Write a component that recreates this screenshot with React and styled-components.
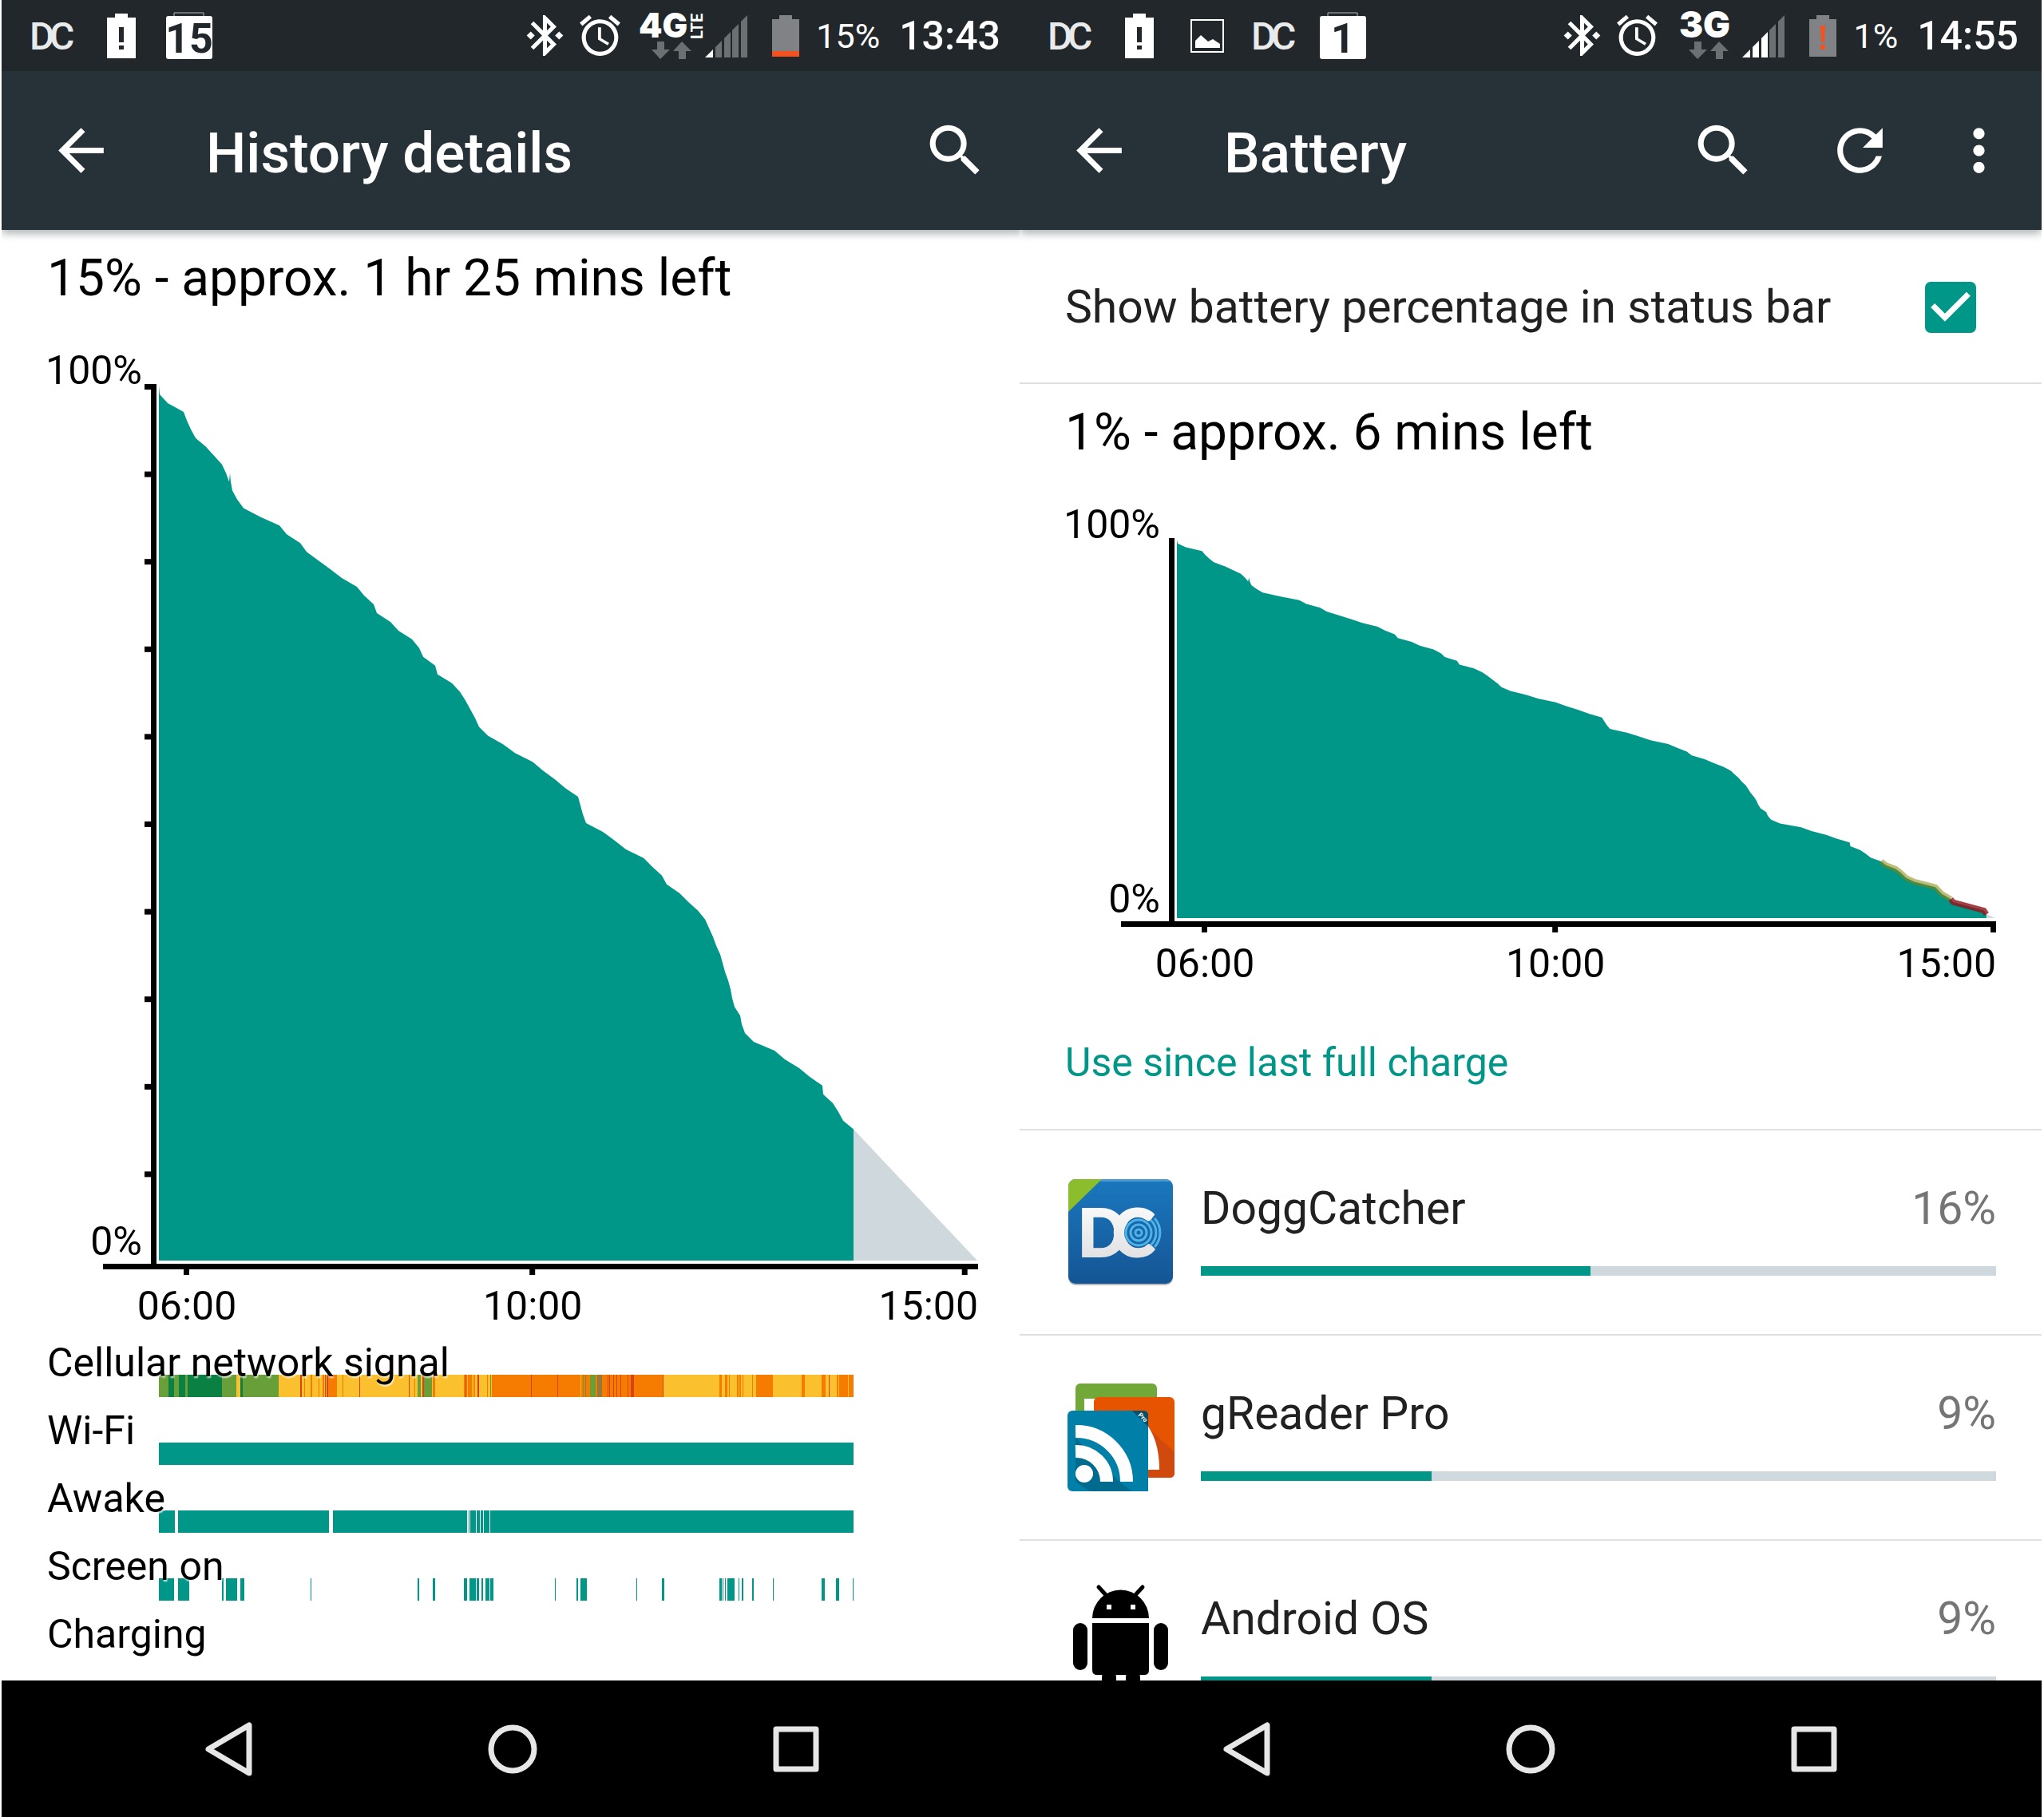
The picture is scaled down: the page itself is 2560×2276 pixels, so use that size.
import React from 'react';
import styled, { createGlobalStyle } from 'styled-components';
import {
  MdAlarm,
  MdArrowBack,
  MdBluetoothConnected,
  MdMoreVert,
  MdRefresh,
  MdSearch,
} from 'react-icons/md';

const TEAL = '#009688';
const GREY = '#cfd8dc';

// [x, battery %], x is in chart units since the charger was unplugged
const HISTORY = [
  [0, 100], [1, 99], [11, 98], [31, 97], [35, 96], [40, 95], [46, 94], [59, 93],
  [69, 92], [79, 91], [84, 90], [88, 89], [89, 90], [90, 89], [92, 88], [98, 87],
  [106, 86], [127, 85], [151, 84], [160, 83], [177, 82], [185, 81], [200, 80],
  [215, 79], [229, 78], [248, 77], [257, 76], [269, 75], [273, 74], [290, 73],
  [300, 72], [317, 71], [326, 70], [331, 69], [346, 68], [349, 67], [367, 66],
  [377, 65], [384, 64], [390, 63], [396, 62], [401, 61], [412, 60], [431, 59],
  [446, 58], [468, 57], [481, 56], [496, 55], [509, 54], [525, 53], [528, 52],
  [531, 51], [535, 50], [556, 49], [571, 48], [585, 47], [607, 46], [618, 45],
  [630, 44], [636, 43], [652, 42], [663, 41], [675, 40], [684, 39], [689, 38],
  [694, 37], [698, 36], [703, 35], [706, 34], [709, 33], [713, 32], [716, 31],
  [718, 30], [721, 29], [728, 28], [730, 27], [734, 26], [745, 25], [771, 24],
  [784, 23], [802, 22], [815, 21], [831, 20], [832, 19], [844, 18], [851, 17],
  [857, 16], [870, 15],
];

const LOW = [
  [870, 15], [876, 14], [888, 13], [894, 12], [901, 10.6], [911, 9.6],
  [937, 8.2], [945, 6.4], [956, 5],
];

const CRITICAL = [[956, 5], [959, 4.2], [997, 2], [1000, 1]];

const SIGNAL_COLORS = {
  D: '#0b8043',
  G: '#689f38',
  Y: '#fbc02d',
  O: '#f57c00',
  R: '#d84315',
  B: '#94793a',
};

// [from, to, strength], later entries are painted over earlier ones
const SIGNAL = [
  [0, 150, 'G'], [12, 19, 'D'], [25, 33, 'D'], [36, 79, 'D'], [97, 102, 'Y'],
  [102, 105, 'D'], [150, 417, 'Y'], [177, 179, 'R'], [182, 183, 'O'],
  [190, 192, 'O'], [200, 201, 'O'], [205, 207, 'O'], [208, 209, 'R'],
  [210, 212, 'R'], [212, 223, 'O'], [230, 231, 'O'], [251, 252, 'R'],
  [313, 314, 'R'], [320, 321, 'O'], [324, 328, 'G'], [330, 332, 'R'],
  [332, 342, 'G'], [343, 346, 'O'], [382, 386, 'O'], [384, 385, 'R'],
  [387, 392, 'O'], [393, 394, 'O'], [395, 396, 'O'], [399, 401, 'R'],
  [411, 412, 'O'], [415, 416, 'G'], [417, 631, 'O'], [466, 467, 'R'],
  [499, 500, 'R'], [528, 529, 'Y'], [531, 532, 'G'], [534, 535, 'B'],
  [540, 547, 'G'], [549, 555, 'B'], [562, 563, 'R'], [564, 565, 'R'],
  [569, 570, 'R'], [573, 574, 'R'], [578, 579, 'R'], [587, 588, 'R'],
  [591, 595, 'R'], [631, 632, 'R'], [632, 870, 'Y'], [702, 705, 'O'],
  [709, 712, 'O'], [714, 715, 'O'], [724, 726, 'O'], [727, 729, 'O'],
  [731, 732, 'O'], [743, 744, 'O'], [748, 769, 'O'], [805, 809, 'O'],
  [830, 835, 'O'], [839, 840, 'R'], [849, 851, 'O'], [852, 863, 'O'],
  [864, 870, 'O'],
];

const AWAKE = [
  [0, 20], [24, 213], [218, 386], [388, 389], [390, 397], [398, 402],
  [403, 406], [407, 414], [415, 870],
];

const SCREEN_ON = [
  [0, 19], [24, 38], [79, 81], [84, 98], [102, 107], [190, 191], [324, 326],
  [343, 346], [382, 386], [389, 397], [398, 401], [404, 406], [409, 414],
  [415, 419], [496, 497], [523, 525], [528, 536], [598, 599], [630, 633],
  [702, 705], [706, 707], [709, 710], [712, 721], [726, 727], [730, 732],
  [743, 745], [769, 770], [830, 834], [848, 852], [869, 870],
];

const TIMELINES = [
  { label: 'Cellular network signal', spans: SIGNAL },
  { label: 'Wi-Fi', spans: [[0, 870]] },
  { label: 'Awake', spans: AWAKE },
  { label: 'Screen on', spans: SCREEN_ON },
  { label: 'Charging', spans: [] },
];

/* ---------- status bar icons ---------- */

const DcNotification = () => (
  <svg width="60" height="60" viewBox="0 0 60 60">
    <text
      x="0"
      y="47"
      fill="#e8eaeb"
      fontFamily="Roboto, sans-serif"
      fontSize="48"
      fontWeight="500"
    >
      D<tspan x="25">C</tspan>
    </text>
  </svg>
);

const BatteryNotification = () => (
  <svg width="36" height="56" viewBox="0 0 36 56">
    <path
      fill="#fff"
      fillRule="evenodd"
      d="M10 0h16v5h10v51H0V5h10zM15 17v19h6V17zM15 40v5h6v-5z"
    />
  </svg>
);

const PictureNotification = () => (
  <svg width="42" height="42" viewBox="0 0 42 42">
    <rect x="1" y="1" width="40" height="40" fill="none" stroke="#fff" strokeWidth="2" />
    <path fill="#fff" d="M6 36V27l7-7 9 8 6-3 9 6v5z" />
  </svg>
);

const CalendarNotification = ({ day }) => (
  <svg width="60" height="60" viewBox="0 0 60 60">
    <path d="M11 6V1h37v5" fill="none" stroke="#b9bcbe" strokeWidth="1" />
    <rect x="1" y="5" width="58" height="54" rx="3" fill="#fff" />
    <text
      x="30"
      y="51"
      textAnchor="middle"
      fill="#21272a"
      fontFamily="Roboto, sans-serif"
      fontWeight="700"
      fontSize="52"
    >
      {day}
    </text>
  </svg>
);

const BARS = [[0, 10], [13, 21], [24, 32], [34, 42], [45, 53]];

const NetworkIcon = ({ type, lte, bars }) => (
  <svg width="156" height="64" viewBox="0 0 156 64">
    <text
      x={lte ? 10 : 14}
      y="34"
      fill="#fff"
      fontFamily="Inter, sans-serif"
      fontSize={lte ? 42 : 45}
      fontWeight="900"
    >
      {type}
    </text>
    {lte && (
      <text
        transform="translate(90 36) rotate(-90)"
        fill="#fff"
        fontFamily="Roboto, sans-serif"
        fontSize="20"
        fontWeight="700"
      >
        LTE
      </text>
    )}
    <g fill="#6b7073" transform="translate(26 39)">
      <path d="M7 0h9v10h7L11 22 0 10h7z" />
      <path d="M34 22h9V12h7L38 0 27 12h7z" />
    </g>
    <g transform="translate(93 6)">
      {BARS.map(([from, to], i) => (
        <path
          key={from}
          fill={i < bars ? '#fff' : '#6b7073'}
          d={`M${from} 53V${53 - from}L${to} ${53 - to}V53z`}
        />
      ))}
    </g>
  </svg>
);

const BatteryStatus = ({ critical }) => (
  <svg width="60" height="60" viewBox="0 0 60 60">
    <path fill="#808285" d="M22 4h16v5h9v47H13V9h9z" />
    {critical ? (
      <path fill="#f4511e" d="M27 17h6l-1 21h-4zM27 41h6v6h-6z" />
    ) : (
      <path fill="#f4511e" d="M13 49h34v7H13z" />
    )}
  </svg>
);

/* ---------- app icons ---------- */

const DoggCatcherIcon = () => (
  <svg viewBox="0 0 142 142">
    <defs>
      <linearGradient id="dc-back" x1="0" y1="0" x2="0" y2="1">
        <stop offset="0" stopColor="#1a78be" />
        <stop offset="1" stopColor="#155594" />
      </linearGradient>
      <linearGradient id="dc-text" x1="0" y1="0" x2="0" y2="1">
        <stop offset="0" stopColor="#fff" />
        <stop offset="1" stopColor="#dcdcde" />
      </linearGradient>
      <clipPath id="dc-clip">
        <rect x="6" y="5" width="131" height="131" rx="9" />
      </clipPath>
    </defs>
    <rect x="6" y="7" width="131" height="131" rx="9" fill="#b8bcc2" />
    <g clipPath="url(#dc-clip)">
      <rect x="6" y="5" width="131" height="131" fill="url(#dc-back)" />
      <rect x="6" y="5" width="131" height="3" fill="#4a9bd3" />
      <path d="M6 5h42L6 46z" fill="#8cbd2c" />
    </g>
    <text
      x="18"
      y="102"
      fill="url(#dc-text)"
      stroke="url(#dc-text)"
      strokeWidth="2"
      fontFamily="Lato, sans-serif"
      fontWeight="900"
      fontSize="81"
    >
      D<tspan x="61">C</tspan>
    </text>
    <circle cx="94" cy="72" r="18" fill="#1767ab" />
    <g fill="none" stroke="#4fb3e6" strokeWidth="3">
      <circle cx="94" cy="72" r="4" />
      <circle cx="94" cy="72" r="10" />
      <circle cx="94" cy="72" r="16" />
      <path d="M109 56a22 22 0 0 1 0 32M114 54a27 27 0 0 1 0 36" />
    </g>
  </svg>
);

const GReaderIcon = () => (
  <svg viewBox="0 0 142 142">
    <rect x="15" y="4" width="102" height="100" rx="6" fill="#72a838" />
    <path d="M26 23h14v18H26z" fill="#fff" />
    <rect x="38" y="21" width="101" height="101" rx="6" fill="#e65400" />
    <path d="M100 54l39 36v26q0 6-6 6H100z" fill="#cf4a0c" />
    <path d="M100 50q20 22 20 62h-20z" fill="#fff" />
    <rect x="5" y="38" width="101" height="101" rx="6" fill="#0080a8" />
    <path d="M15 72l55 55 16 12H33L15 127z" fill="#006b8f" />
    <path d="M15 72a55 55 0 0 1 55 55h16v12h20V92L86 72H15z" fill="#0080a8" />
    <path d="M86 38h14q6 0 6 6v14z" fill="#0a4f68" />
    <text
      transform="translate(93 44) rotate(45)"
      fill="#fff"
      fontFamily="Roboto, sans-serif"
      fontWeight="700"
      fontSize="8"
    >
      Pro
    </text>
    <g fill="none" stroke="#fff" strokeWidth="16">
      <path d="M15 64a63 63 0 0 1 64 63" />
      <path d="M15 89a38 38 0 0 1 39 38" />
    </g>
    <circle cx="26" cy="117" r="11" fill="#fff" />
  </svg>
);

const AndroidIcon = () => (
  <svg viewBox="0 0 142 142">
    <path d="M36 41a35 35 0 0 1 71 0z" />
    <path d="M44 2l11 12M99 2L88 14" stroke="#000" strokeWidth="5" strokeLinecap="round" />
    <path d="M54 24h6v6h-6zM84 24h6v6h-6z" fill="#fff" />
    <path d="M36 47h71v59q0 6-6 6H42q-6 0-6-6z" />
    <rect x="12" y="47" width="18" height="59" rx="9" />
    <rect x="113" y="47" width="18" height="59" rx="9" />
    <rect x="48" y="106" width="18" height="34" rx="9" />
    <rect x="78" y="106" width="18" height="34" rx="9" />
  </svg>
);

/* ---------- chart ---------- */

const PLOT_LEFT = 140;
const PLOT_TOP = 43;
const BASE_HOUR = 108.3;

const Chart = ({ plotHeight, hourWidth, points, end, levelTicks, low }) => {
  const bottom = PLOT_TOP + plotHeight;
  const toXY = ([x, level]) =>
    `${PLOT_LEFT + (x * hourWidth) / BASE_HOUR},${bottom - (level * plotHeight) / 100}`;
  const line = list => list.map(toXY).join(' ');
  const last = points[points.length - 1];
  const hourX = hour => PLOT_LEFT + 35 + (hour - 6) * hourWidth;

  return (
    <ChartSvg viewBox={`0 0 1166 ${bottom + 86}`} role="img" aria-label="Battery level">
      <polygon fill={GREY} points={line([last, [end, 0], [last[0], 0]])} />
      <polygon fill={TEAL} points={line([[0, 0], ...points, [last[0], 0]])} />
      {low && (
        <g fill="none" strokeWidth="7">
          <polyline stroke="rgba(137, 130, 5, 0.54)" points={line(LOW)} />
          <polyline stroke="rgba(145, 20, 28, 0.82)" points={line(CRITICAL)} />
        </g>
      )}
      <rect x="130" y="41" width="7" height={bottom - 37} />
      <rect x="70" y={bottom + 4} width="1096" height="7" />
      {levelTicks &&
        [...Array(10)].map((_, i) => (
          <rect key={i} x="122" y={41 + (i * plotHeight) / 10} width="8" height="7" />
        ))}
      <text x="119" y="41" textAnchor="end">100%</text>
      <text x="119" y={bottom - 7} textAnchor="end">0%</text>
      {[6, 10, 15].map(hour => (
        <rect
          key={hour}
          x={Math.min(hourX(hour) - 4, 1159)}
          y={bottom + 10}
          width="7"
          height="8"
        />
      ))}
      <text x={hourX(6)} y={bottom + 74} textAnchor="middle">06:00</text>
      <text x={hourX(10)} y={bottom + 74} textAnchor="middle">10:00</text>
      <text x="1166" y={bottom + 74} textAnchor="end">15:00</text>
    </ChartSvg>
  );
};

const Timeline = ({ label, spans }) => (
  <TimelineRow>
    <TimelineBar viewBox="0 0 870 28" preserveAspectRatio="none">
      {spans.map(([from, to, strength]) => (
        <rect
          key={from}
          x={from}
          width={to - from}
          height="28"
          fill={strength ? SIGNAL_COLORS[strength] : TEAL}
        />
      ))}
    </TimelineBar>
    <TimelineLabel>{label}</TimelineLabel>
  </TimelineRow>
);

const AppUsage = ({ icon, name, percent, bar }) => (
  <UsageRow>
    <AppIcon>{icon}</AppIcon>
    <UsageBody>
      <UsageText>
        <span>{name}</span>
        <Percent>{percent}%</Percent>
      </UsageText>
      <Track>
        <Fill style={{ width: `${bar}%` }} />
      </Track>
    </UsageBody>
  </UsageRow>
);

const NavBar = () => (
  <Nav>
    <NavButton aria-label="Back">
      <svg width="62" height="70" viewBox="0 0 62 70">
        <path d="M56 5v60L5 35z" />
      </svg>
    </NavButton>
    <NavButton aria-label="Home">
      <svg width="62" height="62" viewBox="0 0 62 62">
        <circle cx="31" cy="31" r="27" />
      </svg>
    </NavButton>
    <NavButton aria-label="Recent apps">
      <svg width="62" height="62" viewBox="0 0 62 62">
        <rect x="6" y="6" width="50" height="50" />
      </svg>
    </NavButton>
  </Nav>
);

const StatusRight = ({ network, level, critical, time }) => (
  <StatusGroup>
    <MdBluetoothConnected />
    <MdAlarm />
    {network}
    <BatteryStatus critical={critical} />
    <Level>{level}%</Level>
    <Clock>{time}</Clock>
  </StatusGroup>
);

const HistoryScreen = () => (
  <Screen>
    <StatusBar>
      <Notifications>
        <DcNotification />
        <BatteryNotification />
        <CalendarNotification day="15" />
      </Notifications>
      <StatusRight network={<NetworkIcon type="4G" lte bars={1} />} level={15} time="13:43" />
    </StatusBar>
    <AppBar>
      <BackButton aria-label="Navigate up"><MdArrowBack /></BackButton>
      <Title>History details</Title>
      <Action aria-label="Search"><MdSearch /></Action>
    </AppBar>
    <Content>
      <Section>
        <Summary>15% - approx. 1 hr 25 mins left</Summary>
        <Chart plotHeight={1096} hourWidth={108.3} points={HISTORY} end={1025} levelTicks />
        <Timelines>
          {TIMELINES.map(row => (
            <Timeline key={row.label} {...row} />
          ))}
        </Timelines>
      </Section>
    </Content>
    <NavBar />
  </Screen>
);

const BatteryScreen = () => (
  <Screen>
    <StatusBar>
      <Notifications>
        <DcNotification />
        <BatteryNotification />
        <PictureNotification />
        <DcNotification />
        <CalendarNotification day="1" />
      </Notifications>
      <StatusRight network={<NetworkIcon type="3G" bars={3} />} level={1} critical time="14:55" />
    </StatusBar>
    <AppBar>
      <BackButton aria-label="Navigate up"><MdArrowBack /></BackButton>
      <Title>Battery</Title>
      <Action aria-label="Search"><MdSearch /></Action>
      <Action aria-label="Refresh"><MdRefresh /></Action>
      <MoreAction aria-label="More options"><MdMoreVert /></MoreAction>
    </AppBar>
    <Content>
      <Setting>
        Show battery percentage in status bar
        <CheckWrap>
          <Checkbox type="checkbox" defaultChecked />
          <svg viewBox="3 3 18 18">
            <path fill="#fff" d="M10 17l-5-5 1.41-1.41L10 14.17l7.59-7.59L19 8z" />
          </svg>
        </CheckWrap>
      </Setting>
      <Section>
        <Summary>1% - approx. 6 mins left</Summary>
        <Chart
          plotHeight={474}
          hourWidth={109.8}
          points={[...HISTORY, ...LOW, ...CRITICAL]}
          end={1011}
          low
        />
        <Category>Use since last full charge</Category>
      </Section>
      <UsageList>
        <AppUsage icon={<DoggCatcherIcon />} name="DoggCatcher" percent={16} bar={49} />
        <AppUsage icon={<GReaderIcon />} name="gReader Pro" percent={9} bar={29} />
        <AppUsage icon={<AndroidIcon />} name="Android OS" percent={9} bar={29} />
      </UsageList>
    </Content>
    <NavBar />
  </Screen>
);

const App = () => (
  <>
    <GlobalStyle />
    <Page>
      <HistoryScreen />
      <BatteryScreen />
    </Page>
  </>
);

export default App;

const GlobalStyle = createGlobalStyle`
  * {
    box-sizing: border-box;
  }

  body {
    margin: 0;
    background: #fff;
    font-family: Roboto, 'Liberation Sans', sans-serif;
  }

  svg {
    display: block;
    flex-shrink: 0;
    overflow: visible;
  }

  button {
    border: 0;
    background: none;
    color: inherit;
    font: inherit;
  }
`;

const Page = styled.main`
  display: flex;
  height: 100vh;
  padding: 0 3px 0 2px;
`;

// the second screen laps a few pixels over the first
const Screen = styled.section`
  flex: 1;
  min-width: 0;
  display: flex;
  flex-direction: column;
  overflow: hidden;
  isolation: isolate;
  background: #fff;

  & + & {
    margin-left: -5px;
  }
`;

const StatusBar = styled.div`
  display: flex;
  flex-shrink: 0;
  align-items: center;
  justify-content: space-between;
  height: 89px;
  padding: 0 29px 0 22px;
  background: #21272a;
  color: #fff;
`;

const Notifications = styled.div`
  display: grid;
  grid-auto-flow: column;
  grid-auto-columns: 85px;
  align-items: center;
  justify-items: center;
`;

const StatusGroup = styled.div`
  display: flex;
  align-items: center;
  gap: 8px;
  font-size: 61px;
`;

const Level = styled.span`
  font-size: 43px;
  line-height: 50px;
`;

const Clock = styled.time`
  margin-left: 16px;
  font-size: 50px;
  line-height: 58px;
  font-weight: 500;
`;

const AppBar = styled.header`
  z-index: 1;
  display: flex;
  flex-shrink: 0;
  align-items: center;
  height: 199px;
  background: #263238;
  color: #fff;
  box-shadow: 0 4px 10px rgba(38, 50, 56, 0.4);
`;

const BackButton = styled.button`
  padding: 0 57px;
  font-size: 85px;
`;

const Title = styled.h1`
  flex: 1;
  margin: 0;
  padding: 6px 0 0 57px;
  font-size: 71px;
  line-height: 84px;
  font-weight: 500;
`;

const Action = styled.button`
  padding: 0 43px;
  font-size: 85px;
`;

const MoreAction = styled(Action)`
  padding: 0 36px 0 21px;
`;

const Content = styled.div`
  flex: 1;
  min-height: 0;
  overflow: hidden;
`;

const Section = styled.div`
  padding: 23px 57px 0;
`;

const Summary = styled.h2`
  margin: 0 0 53px;
  font-size: 64px;
  line-height: 76px;
  font-weight: 400;
`;

const ChartSvg = styled.svg`
  width: 100%;
  font-size: 50px;
`;

const Timelines = styled.div`
  padding-top: 13px;
`;

const TimelineRow = styled.div`
  display: grid;
  grid-template-columns: 140fr 870fr 156fr;
  grid-template-rows: 85px;
`;

const TimelineBar = styled.svg`
  grid-area: 1 / 2;
  width: 100%;
  height: 28px;
  margin-top: 44px;
`;

const TimelineLabel = styled.span`
  grid-area: 1 / 1 / 2 / 4;
  font-size: 50px;
  line-height: 58px;
  text-shadow: 1px 2px 2px rgba(255, 255, 255, 0.8);
`;

const Setting = styled.label`
  display: flex;
  align-items: center;
  justify-content: space-between;
  height: 193px;
  padding: 2px 82px 0 57px;
  border-bottom: 2px solid #e0e0e0;
  color: #212121;
  font-size: 57px;
`;

const CheckWrap = styled.span`
  display: grid;
  width: 64px;
  height: 64px;

  & > * {
    grid-area: 1 / 1;
  }

  svg {
    pointer-events: none;
  }
`;

const Checkbox = styled.input`
  appearance: none;
  margin: 0;
  border: 6px solid #757575;
  border-radius: 7px;

  &:checked {
    border-color: ${TEAL};
    background: ${TEAL};
  }

  &:not(:checked) + svg {
    visibility: hidden;
  }
`;

const Category = styled.h3`
  margin: 66px 0 54px;
  color: ${TEAL};
  font-size: 50px;
  line-height: 58px;
  font-weight: 400;
`;

const UsageList = styled.ul`
  margin: 0;
  padding: 0;
  list-style: none;
`;

const UsageRow = styled.li`
  display: flex;
  gap: 30px;
  padding: 56px 57px 57px 55px;
  border-top: 2px solid #e0e0e0;
`;

const AppIcon = styled.div`
  flex-shrink: 0;
  width: 142px;
  height: 142px;
`;

const UsageBody = styled.div`
  flex: 1;
  padding-top: 8px;
`;

const UsageText = styled.div`
  display: flex;
  justify-content: space-between;
  margin-bottom: 39px;
  color: #212121;
  font-size: 57px;
  line-height: 67px;
`;

const Percent = styled.span`
  color: #757575;
`;

const Track = styled.div`
  height: 12px;
  background: ${GREY};
`;

const Fill = styled.div`
  height: 100%;
  background: ${TEAL};
`;

const Nav = styled.nav`
  display: flex;
  flex-shrink: 0;
  align-items: center;
  justify-content: center;
  height: 171px;
  background: #000;
`;

const NavButton = styled.button`
  display: flex;
  justify-content: center;
  width: 355px;

  svg {
    fill: none;
    stroke: #e6e6e6;
    stroke-width: 7;
    stroke-linejoin: round;
  }
`;
